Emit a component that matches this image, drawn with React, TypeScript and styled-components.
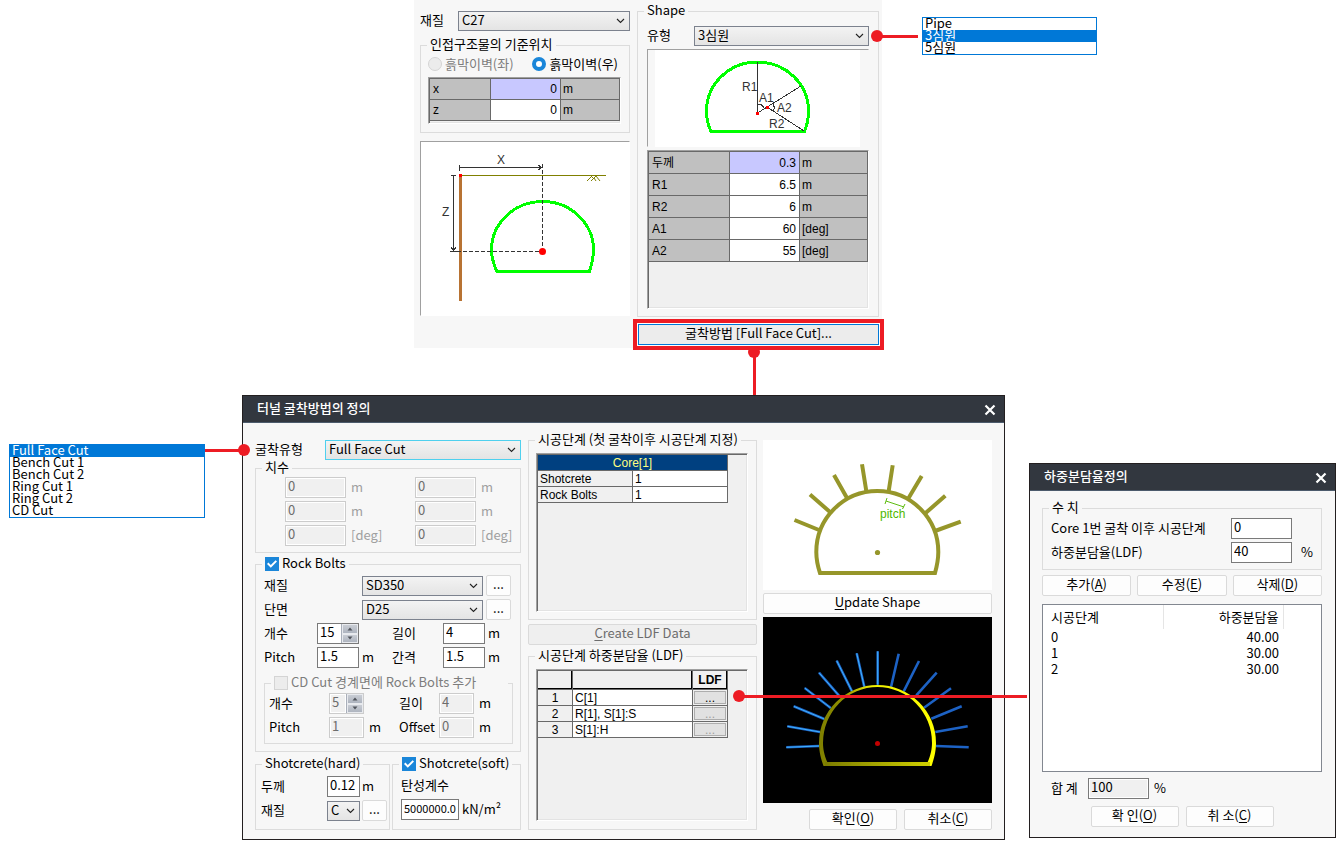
import React from "react";
import styled, { createGlobalStyle, css } from "styled-components";

const GlobalStyle = createGlobalStyle`
  *, *::before, *::after { box-sizing: border-box; }
  body {
    margin: 0;
    background: #fff;
    color: #000;
    font-family: "Noto Sans CJK KR", sans-serif;
    font-size: 13px;
    line-height: 14px;
  }
  button, input, select { font: inherit; color: inherit; margin: 0; }
`;

const RED = "#ed1c24";
const FACE = "#f7f7f7";
const GRID = "#696969";

/* ---------- page ---------- */

const Page = styled.main`
  display: flex;
  flex-direction: column;
  gap: 47px;
`;

const TopRow = styled.div`
  display: flex;
  align-items: flex-start;
  gap: 40px;
  padding-left: 414px;
`;

const BottomRow = styled.div`
  display: flex;
  align-items: flex-start;
  padding: 0 1px 0 9px;
`;

/* ---------- callout lines ---------- */

const Callout = styled.span<{ $vertical?: boolean }>`
  position: absolute;
  z-index: 2;
  background: ${RED};
  ${(p) => (p.$vertical ? "width: 3px;" : "height: 3px;")}
  &::before {
    content: "";
    position: absolute;
    width: 12px;
    height: 12px;
    border-radius: 50%;
    background: ${RED};
  }
`;

const ShapeCallout = styled(Callout)`
  top: 35px;
  left: 463px;
  width: 41px;
  &::before { left: -6px; top: -5px; }
`;

const MethodCallout = styled(Callout)`
  top: 29px;
  left: 116px;
  height: 43px;
  &::before { left: -5px; top: -6px; }
`;

const TypeCallout = styled(Callout)`
  top: 53px;
  left: -38px;
  width: 39px;
  &::before { right: -6px; top: -5px; }
`;

const LdfCallout = styled(Callout)`
  top: 299px;
  left: 496px;
  right: -23px;
  &::before { left: -6px; top: -5px; }
`;

/* ---------- open drop-down lists ---------- */

const OptionList = styled.ul<{ $width: number; $top: number }>`
  flex: none;
  width: ${(p) => p.$width}px;
  margin: ${(p) => p.$top}px 0 0;
  padding: 0;
  list-style: none;
  border: 1px solid #0078d7;
  background: #fff;
`;

const OptionItem = styled.li<{ $selected?: boolean }>`
  height: 12px;
  line-height: 10px;
  padding-left: 2px;
  ${(p) => p.$selected && "background: #0078d7; color: #fff;"}
`;

/* ---------- form parts ---------- */

const Group = styled.fieldset`
  position: relative;
  min-width: 0;
  margin: 0;
  padding: 0;
  border: 1px solid #dcdcdc;
`;

const Legend = styled.legend<{ $wide?: boolean }>`
  display: flex;
  align-items: flex-start;
  gap: 3px;
  height: 14px;
  line-height: 12px;
  margin-left: 6px;
  padding: 0 3px;
  white-space: nowrap;
  ${(p) => p.$wide && "padding-right: 32px;"}
`;

const GroupBody = styled.div<{ $pad: string }>`
  display: flex;
  flex-direction: column;
  gap: 3px;
  padding: ${(p) => p.$pad};
`;

const Row = styled.div<{ $cols: string; $gap?: number }>`
  display: grid;
  grid-template-columns: ${(p) => p.$cols};
  column-gap: ${(p) => p.$gap ?? 3}px;
  align-items: center;
  min-height: 20px;
  white-space: nowrap;
  > label { padding-bottom: 2px; }
`;

const Unit = styled.span<{ $dim?: boolean }>`
  padding-bottom: 2px;
  color: ${(p) => (p.$dim ? "#a0a0a0" : "inherit")};
`;

const DimLabel = styled.label`
  color: #7d7d7d;
`;

const TextBox = styled.input<{ $small?: boolean }>`
  width: 100%;
  height: 21px;
  min-width: 0;
  padding: 0 2px 4px;
  border: 1px solid #7a7a7a;
  border-radius: 0;
  background: #fff;
  font-size: ${(p) => (p.$small ? 11 : 13)}px;
  outline: none;
  &:disabled, &:read-only {
    background: #f0f0f0;
    box-shadow: inset 0 0 0 1px #fff;
  }
  &:disabled {
    border-color: #ccc;
    color: #6d6d6d;
  }
`;

const SpinFrame = styled.span<{ $off?: boolean }>`
  display: flex;
  height: 21px;
  border: 1px solid ${(p) => (p.$off ? "#ccc" : "#7a7a7a")};
  input { border: 0; height: 19px; flex: 1; }
`;

const SpinButtons = styled.span`
  display: flex;
  flex-direction: column;
  flex: none;
  width: 17px;
  border-left: 1px solid #a9afba;
  background: #f0f0f0;
`;

const SpinButton = styled.button`
  flex: 1;
  display: flex;
  align-items: center;
  justify-content: center;
  min-height: 0;
  padding: 0;
  border: 1px solid #e8eaee;
  background: linear-gradient(#c9cdd4, #aeb4bf);
`;

const SelectFrame = styled.span`
  position: relative;
  display: block;
  svg {
    position: absolute;
    right: 5px;
    top: 7px;
    pointer-events: none;
  }
`;

const SelectBox = styled.select<{ $active?: boolean }>`
  appearance: none;
  display: block;
  width: 100%;
  height: 20px;
  padding: 0 14px 2px 3px;
  border: 1px solid ${(p) => (p.$active ? "#4fd0ee" : "#7c828e")};
  border-radius: 0;
  background: linear-gradient(#f3f3f3, #e4e4e4);
  line-height: 16px;
  outline: none;
`;

const PushButton = styled.button<{ $width?: number }>`
  display: flex;
  align-items: center;
  justify-content: center;
  width: ${(p) => (p.$width ? `${p.$width}px` : "100%")};
  height: 21px;
  padding: 0 0 3px;
  border: 1px solid #dadada;
  border-radius: 2px;
  background: #fdfdfd;
  white-space: pre;
  u { text-underline-offset: 2px; }
  &:disabled { background: #efefef; color: #6d6d6d; }
`;

const Check = styled.input`
  appearance: none;
  position: relative;
  flex: none;
  width: 14px;
  height: 14px;
  border: 1px solid #d4d4d4;
  background: #ececec;
  &:checked { background: #1a86d9; border-color: #1a86d9; }
  &:checked::before {
    content: "";
    position: absolute;
    inset: 1px;
    background: #fff;
    clip-path: polygon(0 50%, 14% 36%, 38% 60%, 86% 12%, 100% 26%, 38% 88%);
  }
`;

const RadioRow = styled.div`
  display: flex;
  justify-content: space-between;
  padding-right: 3px;
  white-space: nowrap;
`;

const RadioLabel = styled.label<{ $dim?: boolean }>`
  display: flex;
  align-items: center;
  gap: 3px;
  color: ${(p) => (p.$dim ? "#7d7d7d" : "inherit")};
`;

const Radio = styled.input`
  appearance: none;
  width: 14px;
  height: 14px;
  border: 1px solid #d4d4d4;
  border-radius: 50%;
  background: #ececec;
  &:checked { border: 4px solid #1a86d9; background: #fff; }
`;

const Sunken = styled.div<{ $height: number }>`
  height: ${(p) => p.$height}px;
  overflow: hidden;
  background: #f0f0f0;
  border: 1px solid;
  border-color: #a0a0a0 #fff #fff #a0a0a0;
  box-shadow: inset 1px 1px 0 ${GRID}, inset -1px -1px 0 #e3e3e3;
`;

const Canvas = styled.div<{ $height: number }>`
  display: flex;
  justify-content: center;
  height: ${(p) => p.$height}px;
  border: 1px solid;
  border-color: #a0a0a0 #fff #fff #a0a0a0;
  background: #fff;
`;

const InsetCanvas = styled(Canvas)`
  justify-content: flex-start;
  padding-left: 7px;
  border-color: #a0a0a0 ${FACE} ${FACE} #a0a0a0;
  background: ${FACE};
  svg { background: #fff; }
`;

/* ---------- property grids ---------- */

const cellBase = css`
  padding: 0 2px;
  border: 1px solid ${GRID};
  font-weight: 400;
  text-align: left;
  white-space: nowrap;
  overflow: hidden;
`;

const GridTable = styled.table<{ $width: string; $row: number }>`
  width: ${(p) => p.$width};
  table-layout: fixed;
  border-collapse: collapse;
  font-family: "Liberation Sans", "Noto Sans CJK KR", sans-serif;
  font-size: 12px;
  tr { height: ${(p) => p.$row}px; }
`;

const NameCell = styled.th`
  ${cellBase}
  padding-left: 3px;
  background: #c0c0c0;
`;

const ValueCell = styled.td<{ $selected?: boolean }>`
  ${cellBase}
  padding-right: 3px;
  text-align: right;
  background: ${(p) => (p.$selected ? "#c8c8ff" : "#fff")};
`;

const UnitCell = styled.td`
  ${cellBase}
  background: #c0c0c0;
`;

const StageTitle = styled.th`
  ${cellBase}
  text-align: center;
  background: #004080;
  color: #ffff80;
`;

const StageName = styled.th<{ $center?: boolean }>`
  ${cellBase}
  background: #f0f0f0;
  text-align: ${(p) => (p.$center ? "center" : "left")};
`;

const StageValue = styled.td`
  ${cellBase}
  background: #fff;
`;

const HeadCell = styled.th`
  ${cellBase}
  height: 19px;
  background: #f0f0f0;
  box-shadow: inset -1px -1px 0 #000;
  font-weight: 700;
  text-align: center;
`;

const ButtonCell = styled.td`
  ${cellBase}
  padding: 0 1px;
  background: #f0f0f0;
`;

const CellButton = styled.button<{ $dim?: boolean }>`
  display: block;
  width: 100%;
  height: 13px;
  padding: 0;
  border: 1px solid #adadad;
  background: #e1e1e1;
  line-height: 10px;
  color: ${(p) => (p.$dim ? "#a0a0a0" : "#000")};
`;

/* ---------- shape panel ---------- */

const ShapePanel = styled.section`
  position: relative;
  display: flex;
  gap: 7px;
  padding: 0 3px 0 6px;
  background: ${FACE};
`;

const PanelLeft = styled.div`
  width: 210px;
  padding-top: 11px;
`;

const PanelRight = styled.div`
  width: 242px;
  padding-top: 4px;
`;

const PositionGroup = styled(Group)`
  margin: 7px 0 8px;
`;

const Spaced = styled.div<{ $top: number }>`
  margin-top: ${(p) => p.$top}px;
`;

const Highlight = styled.div`
  position: relative;
  margin: 2px -5px -2px -4px;
  height: 31px;
  padding: 1px;
  border: 4px solid ${RED};
  background: #fff;
`;

const MethodButton = styled.button`
  display: block;
  width: 100%;
  height: 21px;
  padding: 0 0 3px;
  border: 1px solid #0078d7;
  background: #ececec;
`;

/* ---------- dialogs ---------- */

const Dialog = styled.section`
  position: relative;
  border: 1px solid #231f20;
  background: ${FACE};
`;

const MethodDialog = styled(Dialog)`
  flex: 1;
  min-width: 763px;
  margin: 0 24px 0 37px;
`;

const LdfDialog = styled(Dialog)`
  flex: none;
  width: 307px;
  margin-top: 68px;
`;

const TitleBar = styled.header`
  display: flex;
  align-items: center;
  justify-content: space-between;
  height: 27px;
  padding: 0 8px 0 14px;
  background: #32373f;
  border-bottom: 1px solid #4c5b6c;
  color: #fff;
`;

const Title = styled.h2`
  margin: 0;
  padding-bottom: 2px;
  font-size: 13px;
  line-height: 14px;
  font-weight: 500;
`;

const CloseButton = styled.button`
  display: flex;
  padding: 2px 0 0;
  border: 0;
  background: none;
`;

const MethodBody = styled.div`
  display: flex;
  align-items: flex-start;
  gap: 6px;
  padding: 10px 12px 9px;
`;

const SettingsColumn = styled.div`
  flex: none;
  width: 266px;
  padding-top: 7px;
`;

const StageColumn = styled.div`
  flex: none;
  width: 230px;
  display: flex;
  flex-direction: column;
  gap: 4px;
  padding-left: 1px;
`;

const PreviewColumn = styled.div`
  flex: 1;
  display: flex;
  flex-direction: column;
  gap: 3px;
  padding-top: 7px;
`;

const Preview = styled.div<{ $dark?: boolean; $height: number }>`
  display: flex;
  justify-content: center;
  height: ${(p) => p.$height}px;
  background: ${(p) => (p.$dark ? "#000" : "#fff")};
`;

const Actions = styled.div<{ $align: string; $top: number }>`
  display: flex;
  gap: 7px;
  justify-content: ${(p) => p.$align};
  margin-top: ${(p) => p.$top}px;
`;

const SizeGroup = styled(Group)`
  margin: 1px 0 4px;
`;

const ExtraBolts = styled(Group)`
  margin-top: 5px;
`;

const ShotcreteRow = styled.div`
  display: grid;
  grid-template-columns: 135px 1fr;
  gap: 2px;
  margin-top: 5px;
`;

const LdfBody = styled.div`
  padding: 10px 13px 10px 12px;
`;

const ButtonTrio = styled.div`
  display: grid;
  grid-template-columns: repeat(3, 1fr);
  gap: 6px;
  margin: 5px 0 8px;
`;

const ListView = styled.div`
  height: 168px;
  margin-bottom: 6px;
  border: 1px solid #828790;
  background: #fff;
`;

const ListTable = styled.table`
  width: 100%;
  table-layout: fixed;
  border-collapse: collapse;
  th, td {
    height: 16px;
    padding: 0 4px 0 8px;
    font-weight: 400;
    text-align: left;
  }
  th { height: 24px; border-right: 1px solid #e5e5e5; }
  th:last-child { border-right: 0; }
  th:nth-child(2), td:nth-child(2) { text-align: right; }
`;

/* ---------- drawings ---------- */

const Chevron = () => (
  <svg width="9" height="6" viewBox="0 0 9 6" aria-hidden="true">
    <path d="M1 1 L4.5 4.5 L8 1" fill="none" stroke="#222" strokeWidth="1.1" />
  </svg>
);

const CloseIcon = () => (
  <svg width="12" height="12" viewBox="0 0 12 12" aria-hidden="true">
    <path d="M1.5 1.5 L10.5 10.5 M10.5 1.5 L1.5 10.5" stroke="#fff" strokeWidth="2.2" />
  </svg>
);

const Arrow = ({ down }: { down?: boolean }) => (
  <svg width="6" height="4" viewBox="0 0 6 4" aria-hidden="true">
    <path d={down ? "M0.5 0.5 H5.5 L3 3.5 Z" : "M0.5 3.5 H5.5 L3 0.5 Z"} fill="#50545c" />
  </svg>
);

const drawFont = { fontFamily: "Liberation Sans", fontSize: 12, fill: "#333" };

const PositionDrawing = () => (
  <svg width="208" height="173" viewBox="0 0 208 173" role="img" aria-label="X, Z">
    <g fill="none" shapeRendering="crispEdges">
      <rect x="38" y="35" width="3" height="124" fill="#b87333" />
      <path d="M40 33.5 H185" stroke="#808000" />
      <path d="M30 33.5 H35 M32.5 33.5 V109 M30 105 L32.5 109 L35 105 M29 109.5 H36" stroke="#333" />
      <path d="M38.5 23 V29 M38.5 25.5 H121 M117 23 L121 25.5 L117 28" stroke="#333" />
      <path d="M76 129.5 C72 121 70.5 114 70.5 108 A51 48.5 0 0 1 172.5 108 C172.5 114 171 121 168.5 129.5 Z" stroke="#0f0" strokeWidth="3" />
      <path d="M121.5 22 V104" stroke="#333" strokeDasharray="4 2" />
      <path d="M36 109.5 H118" stroke="#333" strokeDasharray="4 2" />
      <rect x="38" y="32" width="3" height="3" fill="#f00" />
    </g>
    <path d="M166 39 L171 34 M170 39 L175 34 L179 39 M173 36 L175 39 M170 34 L173 37" stroke="#808000" fill="none" />
    <circle cx="121.5" cy="109.5" r="3.5" fill="#f00" />
    <text x="76" y="22" {...drawFont}>X</text>
    <text x="21" y="74" {...drawFont}>Z</text>
  </svg>
);

const ShapeDrawing = () => (
  <svg width="205" height="97" viewBox="0 0 205 97" role="img" aria-label="R1, R2, A1, A2">
    <g fill="none" shapeRendering="crispEdges">
      <path d="M56 81.5 C52.5 74 51.5 67 51.5 61 A51 49 0 0 1 153.5 61 C153.5 67 152.5 74 149.5 81.5 Z" stroke="#0f0" strokeWidth="3" />
      <path d="M102.5 12 V63 M102.5 63 L146 36 M112 57 L149 81" stroke="#333" />
      <path d="M103 54 Q107 54 109 58 M117 53 Q121 57 118 61" stroke="#333" />
      <rect x="101" y="62" width="3" height="3" fill="#f00" />
      <rect x="111" y="56" width="3" height="3" fill="#f00" />
    </g>
    <g {...drawFont}>
      <text x="87" y="41">R1</text>
      <text x="104" y="52">A1</text>
      <text x="122" y="62">A2</text>
      <text x="114" y="78">R2</text>
    </g>
  </svg>
);

const PitchDrawing = () => (
  <svg width="229" height="149" viewBox="0 0 229 149" role="img" aria-label="Rock bolt pitch">
    <g fill="none" stroke="#96962a" strokeWidth="4">
      <path d="M57 133 C54 124 53.3 118 53.3 112 A61 61 0 0 1 175.3 112 C175.3 118 174.5 124 172 133 Z" />
      <path d="M31.5 80 L56 90 M47 54.5 L67 72 M71 35 L84 58 M99 24.3 L103.3 51 M129.7 25.3 L125.7 51 M158.7 36 L145 59 M182.3 55.7 L162.3 73.3 M197.7 81.7 L172 91" />
    </g>
    <circle cx="114.5" cy="112.5" r="2.6" fill="#96962a" />
    <path d="M123 61 L141 67 M124 58 L122 64 M142 64 L139.5 69" stroke="#5ebd10" fill="none" />
    <text x="117" y="78" fontFamily="Liberation Sans" fontSize="12" fill="#4fb800">pitch</text>
  </svg>
);

const leftBolts =
  "M23.3 130.3 L56 129 M24.3 109.3 L57 115 M30.7 89.3 L61.3 102 M41.7 71 L67.7 91 M56 55.7 L76 78.7 M73.7 43.7 L89 74.3 M93.7 36.3 L101.3 69.7 M114.7 34.3 V67.7";
const rightBolts =
  "M135.7 36.7 L128 70 M156 44 L140.7 74.3 M173.7 55.7 L153.3 78.3 M188 71.3 L161 90.7 M198.7 89.3 L168.3 101.7 M204.7 109.3 L172.3 115 M205.7 130.3 L173 129";

const ModelDrawing = () => (
  <svg width="229" height="186" viewBox="0 0 229 186" role="img" aria-label="Tunnel model">
    <defs>
      <linearGradient id="base" x1="0" x2="1">
        <stop offset="0" stopColor="#7c7c00" />
        <stop offset="1" stopColor="#d0d000" />
      </linearGradient>
      <linearGradient id="crown" gradientUnits="userSpaceOnUse" x1="58" y1="0" x2="171" y2="0">
        <stop offset="0" stopColor="#808000" />
        <stop offset="0.2" stopColor="#909000" />
        <stop offset="0.45" stopColor="#f0f000" />
        <stop offset="1" stopColor="#ff0" />
      </linearGradient>
    </defs>
    <g fill="none">
      <path d={leftBolts} stroke="#1c5fc0" strokeWidth="2.6" />
      <path d={leftBolts} stroke="#3fb4ff" strokeWidth="1" />
      <path d={rightBolts} stroke="#1d62c4" strokeWidth="2.6" />
    </g>
    <path fill="url(#crown)" fillRule="evenodd" d="M60.5 149 C57 139 56 132 56 126 A58.5 58 0 0 1 173 126 C173 132 172 139 168.5 149 Z M64.5 145.5 H164.5 C168 138 169 131 169 126 A54.5 56 0 0 0 60 126 C60 131 61 138 64.5 145.5 Z" />
    <rect x="62" y="145" width="105" height="4" fill="url(#base)" />
    <circle cx="114.5" cy="126.5" r="2.5" fill="#c40000" />
  </svg>
);

/* ---------- composed controls ---------- */

type SelectProps = { id: string; value: string; options?: string[]; active?: boolean };

const Select = ({ id, value, options = [value], active }: SelectProps) => (
  <SelectFrame>
    <SelectBox id={id} defaultValue={value} $active={active}>
      {options.map((o) => (
        <option key={o}>{o}</option>
      ))}
    </SelectBox>
    <Chevron />
  </SelectFrame>
);

const Spin = ({ id, value, off }: { id: string; value: string; off?: boolean }) => (
  <SpinFrame $off={off}>
    <TextBox id={id} defaultValue={value} disabled={off} />
    <SpinButtons>
      <SpinButton aria-label="+" disabled={off}><Arrow /></SpinButton>
      <SpinButton aria-label="-" disabled={off}><Arrow down /></SpinButton>
    </SpinButtons>
  </SpinFrame>
);

const tunnelTypes = ["Pipe", "3심원", "5심원"];
const cutTypes = ["Full Face Cut", "Bench Cut 1", "Bench Cut 2", "Ring Cut 1", "Ring Cut 2", "CD Cut"];

const shapeRows = [
  ["두께", "0.3", "m"],
  ["R1", "6.5", "m"],
  ["R2", "6", "m"],
  ["A1", "60", "[deg]"],
  ["A2", "55", "[deg]"],
];

const PropertyGrid = ({ rows, widths, row }: { rows: string[][]; widths: number[]; row: number }) => (
  <GridTable $width="100%" $row={row}>
    <colgroup>
      {widths.map((w, i) => (
        <col key={i} style={{ width: w }} />
      ))}
      <col />
    </colgroup>
    <tbody>
      {rows.map(([name, value, unit], i) => (
        <tr key={name}>
          <NameCell scope="row">{name}</NameCell>
          <ValueCell $selected={i === 0}>{value}</ValueCell>
          <UnitCell>{unit}</UnitCell>
        </tr>
      ))}
    </tbody>
  </GridTable>
);

const Options = ({ items, selected, width, top, label }: { items: string[]; selected: string; width: number; top: number; label: string }) => (
  <OptionList role="listbox" aria-label={label} $width={width} $top={top}>
    {items.map((o) => (
      <OptionItem key={o} role="option" aria-selected={o === selected} $selected={o === selected}>
        {o}
      </OptionItem>
    ))}
  </OptionList>
);

/* ---------- sections ---------- */

const TunnelShape = () => (
  <ShapePanel>
    <PanelLeft>
      <Row $cols="1fr 172px">
        <label htmlFor="material">재질</label>
        <Select id="material" value="C27" />
      </Row>
      <PositionGroup>
        <Legend>인접구조물의 기준위치</Legend>
        <GroupBody $pad="5px 8px 8px 7px">
          <RadioRow>
            <RadioLabel $dim><Radio type="radio" name="side" disabled />흙막이벽(좌)</RadioLabel>
            <RadioLabel><Radio type="radio" name="side" defaultChecked />흙막이벽(우)</RadioLabel>
          </RadioRow>
          <Spaced $top={3}>
            <Sunken $height={47}>
              <PropertyGrid rows={[["x", "0", "m"], ["z", "0", "m"]]} widths={[61, 70]} row={21} />
            </Sunken>
          </Spaced>
        </GroupBody>
      </PositionGroup>
      <Canvas $height={175}><PositionDrawing /></Canvas>
    </PanelLeft>
    <PanelRight>
      <Group>
        <Legend>Shape</Legend>
        <GroupBody $pad="8px 9px 7px 9px">
          <Row $cols="1fr 175px">
            <label htmlFor="shape-type">유형</label>
            <Select id="shape-type" value="3심원" options={tunnelTypes} />
          </Row>
          <InsetCanvas $height={98}><ShapeDrawing /></InsetCanvas>
          <Sunken $height={159}>
            <PropertyGrid rows={shapeRows} widths={[81, 70]} row={22} />
          </Sunken>
        </GroupBody>
      </Group>
      <Highlight>
        <MethodButton>굴착방법 [Full Face Cut]...</MethodButton>
        <MethodCallout $vertical />
      </Highlight>
    </PanelRight>
    <ShapeCallout />
  </ShapePanel>
);

const BOLT_COLS = "50px 42px 27px 48px 42px 20px";
const EXTRA_COLS = "55px 35px 25px 35px 35px 20px";

const Settings = () => (
  <SettingsColumn>
    <Row $cols="67px 1fr">
      <label htmlFor="cut-type">굴착유형</label>
      <Select id="cut-type" value="Full Face Cut" options={cutTypes} active />
    </Row>
    <SizeGroup disabled>
      <Legend>치수</Legend>
      <GroupBody $pad="2px 5px 6px 29px">
        {["m", "m", "[deg]"].map((unit, i) => (
          <Row key={i} $cols="61px 59px 61px 34px" $gap={5}>
            <TextBox aria-label={`치수 ${2 * i + 1}`} defaultValue="0" />
            <Unit $dim>{unit}</Unit>
            <TextBox aria-label={`치수 ${2 * i + 2}`} defaultValue="0" />
            <Unit $dim>{unit}</Unit>
          </Row>
        ))}
      </GroupBody>
    </SizeGroup>
    <Group>
      <Legend>
        <Check type="checkbox" id="bolts" defaultChecked />
        <label htmlFor="bolts">Rock Bolts</label>
      </Legend>
      <GroupBody $pad="4px 7px 7px 8px">
        <Row $cols="95px 121px 25px">
          <label htmlFor="bolt-mat">재질</label>
          <Select id="bolt-mat" value="SD350" />
          <PushButton>...</PushButton>
        </Row>
        <Row $cols="95px 121px 25px">
          <label htmlFor="bolt-sec">단면</label>
          <Select id="bolt-sec" value="D25" />
          <PushButton>...</PushButton>
        </Row>
        <Row $cols={BOLT_COLS}>
          <label htmlFor="bolt-n">개수</label>
          <Spin id="bolt-n" value="15" />
          <span />
          <label htmlFor="bolt-len">길이</label>
          <TextBox id="bolt-len" defaultValue="4" />
          <Unit>m</Unit>
        </Row>
        <Row $cols={BOLT_COLS}>
          <label htmlFor="bolt-pitch">Pitch</label>
          <TextBox id="bolt-pitch" defaultValue="1.5" />
          <Unit>m</Unit>
          <label htmlFor="bolt-gap">간격</label>
          <TextBox id="bolt-gap" defaultValue="1.5" />
          <Unit>m</Unit>
        </Row>
        <ExtraBolts>
          <Legend $wide>
            <Check type="checkbox" id="extra" disabled />
            <DimLabel htmlFor="extra">CD Cut 경계면에 Rock Bolts 추가</DimLabel>
          </Legend>
          <GroupBody $pad="3px 4px 5px 4px">
            <Row $cols={EXTRA_COLS} $gap={5}>
              <label htmlFor="extra-n">개수</label>
              <Spin id="extra-n" value="5" off />
              <span />
              <label htmlFor="extra-len">길이</label>
              <TextBox id="extra-len" defaultValue="4" disabled />
              <Unit>m</Unit>
            </Row>
            <Row $cols={EXTRA_COLS} $gap={5}>
              <label htmlFor="extra-pitch">Pitch</label>
              <TextBox id="extra-pitch" defaultValue="1" disabled />
              <Unit>m</Unit>
              <label htmlFor="extra-off">Offset</label>
              <TextBox id="extra-off" defaultValue="0" disabled />
              <Unit>m</Unit>
            </Row>
          </GroupBody>
        </ExtraBolts>
      </GroupBody>
    </Group>
    <ShotcreteRow>
      <Group>
        <Legend>Shotcrete(hard)</Legend>
        <GroupBody $pad="5px 2px 8px 5px">
          <Row $cols="64px 33px 25px" $gap={2}>
            <label htmlFor="hard-t">두께</label>
            <TextBox id="hard-t" defaultValue="0.12" />
            <Unit>m</Unit>
          </Row>
          <Row $cols="64px 33px 25px" $gap={2}>
            <label htmlFor="hard-m">재질</label>
            <Select id="hard-m" value="C" />
            <PushButton>...</PushButton>
          </Row>
        </GroupBody>
      </Group>
      <Group>
        <Legend>
          <Check type="checkbox" id="soft" defaultChecked />
          <label htmlFor="soft">Shotcrete(soft)</label>
        </Legend>
        <GroupBody $pad="5px 2px 8px 8px">
          <Row $cols="1fr"><label htmlFor="soft-e">탄성계수</label></Row>
          <Row $cols="58px 1fr">
            <TextBox id="soft-e" defaultValue="5000000.0" $small />
            <Unit>kN/m²</Unit>
          </Row>
        </GroupBody>
      </Group>
    </ShotcreteRow>
  </SettingsColumn>
);

const Stages = () => (
  <StageColumn>
    <Group>
      <Legend>시공단계 (첫 굴착이후 시공단계 지정)</Legend>
      <GroupBody $pad="6px 8px 7px 7px">
        <Sunken $height={159}>
          <GridTable $width="191px" $row={16}>
            <colgroup><col style={{ width: 95 }} /><col /></colgroup>
            <thead>
              <tr><StageTitle colSpan={2}>Core[1]</StageTitle></tr>
            </thead>
            <tbody>
              <tr><StageName scope="row">Shotcrete</StageName><StageValue>1</StageValue></tr>
              <tr><StageName scope="row">Rock Bolts</StageName><StageValue>1</StageValue></tr>
            </tbody>
          </GridTable>
        </Sunken>
      </GroupBody>
    </Group>
    <PushButton disabled><u>C</u>reate LDF Data</PushButton>
    <Group>
      <Legend>시공단계 하중분담율 (LDF)</Legend>
      <GroupBody $pad="6px 8px 8px 7px">
        <Sunken $height={152}>
          <GridTable $width="191px" $row={16}>
            <colgroup><col style={{ width: 35 }} /><col /><col style={{ width: 35 }} /></colgroup>
            <thead>
              <tr><HeadCell /><HeadCell /><HeadCell>LDF</HeadCell></tr>
            </thead>
            <tbody>
              {["C[1]", "R[1], S[1]:S", "S[1]:H"].map((name, i) => (
                <tr key={name}>
                  <StageName scope="row" $center>{i + 1}</StageName>
                  <StageValue>{name}</StageValue>
                  <ButtonCell><CellButton $dim={i > 0}>...</CellButton></ButtonCell>
                </tr>
              ))}
            </tbody>
          </GridTable>
        </Sunken>
      </GroupBody>
    </Group>
  </StageColumn>
);

const ExcavationDialog = () => (
  <MethodDialog>
    <TitleBar>
      <Title>터널 굴착방법의 정의</Title>
      <CloseButton aria-label="닫기"><CloseIcon /></CloseButton>
    </TitleBar>
    <MethodBody>
      <Settings />
      <Stages />
      <PreviewColumn>
        <Preview $height={150}><PitchDrawing /></Preview>
        <PushButton><u>U</u>pdate Shape</PushButton>
        <Preview $height={186} $dark><ModelDrawing /></Preview>
        <Actions $align="flex-end" $top={3}>
          <PushButton $width={88}>확인(<u>O</u>)</PushButton>
          <PushButton $width={88}>취소(<u>C</u>)</PushButton>
        </Actions>
      </PreviewColumn>
    </MethodBody>
    <TypeCallout />
    <LdfCallout />
  </MethodDialog>
);

const LoadDialog = () => (
  <LdfDialog>
    <TitleBar>
      <Title>하중분담율정의</Title>
      <CloseButton aria-label="닫기"><CloseIcon /></CloseButton>
    </TitleBar>
    <LdfBody>
      <Group>
        <Legend>수 치</Legend>
        <GroupBody $pad="3px 9px 6px 8px">
          <Row $cols="171px 61px 20px" $gap={9}>
            <label htmlFor="stage">Core 1번 굴착 이후 시공단계</label>
            <TextBox id="stage" defaultValue="0" />
          </Row>
          <Row $cols="171px 61px 20px" $gap={9}>
            <label htmlFor="ldf">하중분담율(LDF)</label>
            <TextBox id="ldf" defaultValue="40" />
            <Unit>%</Unit>
          </Row>
        </GroupBody>
      </Group>
      <ButtonTrio>
        <PushButton>추가(<u>A</u>)</PushButton>
        <PushButton>수정(<u>E</u>)</PushButton>
        <PushButton>삭제(<u>D</u>)</PushButton>
      </ButtonTrio>
      <ListView>
        <ListTable>
          <colgroup><col style={{ width: 120 }} /><col style={{ width: 120 }} /><col /></colgroup>
          <thead>
            <tr><th>시공단계</th><th>하중분담율</th><th /></tr>
          </thead>
          <tbody>
            {[["0", "40.00"], ["1", "30.00"], ["2", "30.00"]].map(([stage, share]) => (
              <tr key={stage}><td>{stage}</td><td>{share}</td><td /></tr>
            ))}
          </tbody>
        </ListTable>
      </ListView>
      <GroupBody $pad="0 9px">
        <Row $cols="32px 61px 20px" $gap={5}>
          <label htmlFor="total">합 계</label>
          <TextBox id="total" defaultValue="100" readOnly />
          <Unit>%</Unit>
        </Row>
      </GroupBody>
      <Actions $align="center" $top={7}>
        <PushButton $width={88}>확 인(<u>O</u>)</PushButton>
        <PushButton $width={88}>취 소(<u>C</u>)</PushButton>
      </Actions>
    </LdfBody>
  </LdfDialog>
);

export default function App() {
  return (
    <>
      <GlobalStyle />
      <Page>
        <TopRow>
          <TunnelShape />
          <Options items={tunnelTypes} selected="3심원" width={175} top={17} label="유형" />
        </TopRow>
        <BottomRow>
          <Options items={cutTypes} selected="Full Face Cut" width={196} top={49} label="굴착유형" />
          <ExcavationDialog />
          <LoadDialog />
        </BottomRow>
      </Page>
    </>
  );
}
